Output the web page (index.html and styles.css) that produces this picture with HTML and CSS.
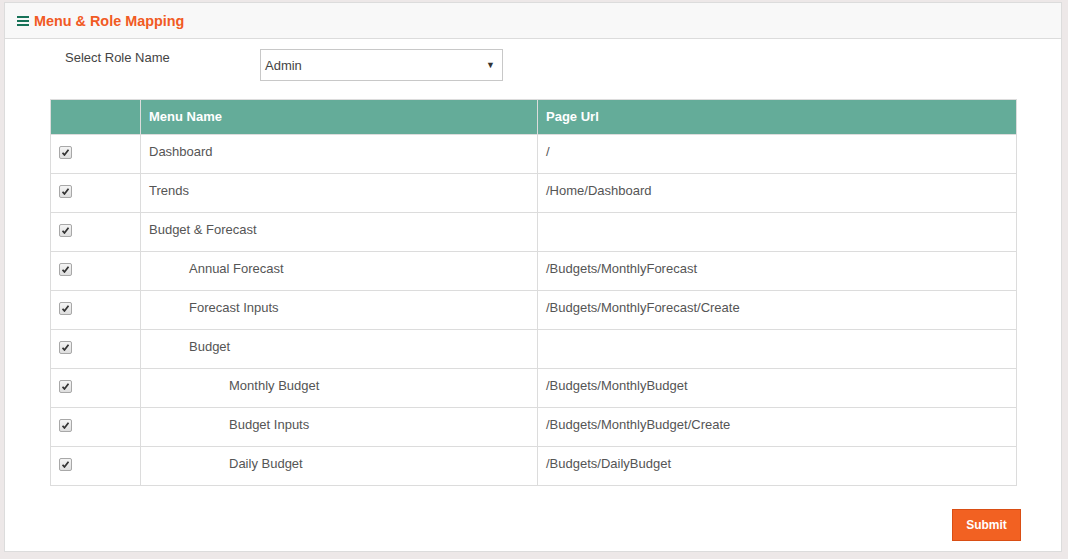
FILE: index.html
```html
<!DOCTYPE html>
<html>
<head>
<meta charset="utf-8">
<link rel="stylesheet" href="styles.css">
</head>
<body>
<div class="panel">
  <div class="panel-head">
    <svg class="bars" width="12" height="10" viewBox="0 0 12 10"><rect x="0" y="0" width="12" height="2" fill="#177258"/><rect x="0" y="4" width="12" height="2" fill="#177258"/><rect x="0" y="8" width="12" height="2" fill="#177258"/></svg>
    <span class="title">Menu &amp; Role Mapping</span>
  </div>
  <div class="panel-body">
    <div class="form-row">
      <label class="lbl">Select Role Name</label>
      <div class="select"><span>Admin</span><span class="caret">&#9660;</span></div>
    </div>
    <table class="grid">
      <colgroup><col class="c1"><col class="c2"><col class="c3"></colgroup>
      <thead>
        <tr><th></th><th>Menu Name</th><th>Page Url</th></tr>
      </thead>
      <tbody>
        <tr><td><span class="cb"></span></td><td>Dashboard</td><td>/</td></tr>
        <tr><td><span class="cb"></span></td><td>Trends</td><td>/Home/Dashboard</td></tr>
        <tr><td><span class="cb"></span></td><td>Budget &amp; Forecast</td><td></td></tr>
        <tr><td><span class="cb"></span></td><td class="l2">Annual Forecast</td><td>/Budgets/MonthlyForecast</td></tr>
        <tr><td><span class="cb"></span></td><td class="l2">Forecast Inputs</td><td>/Budgets/MonthlyForecast/Create</td></tr>
        <tr><td><span class="cb"></span></td><td class="l2">Budget</td><td></td></tr>
        <tr><td><span class="cb"></span></td><td class="l3">Monthly Budget</td><td>/Budgets/MonthlyBudget</td></tr>
        <tr><td><span class="cb"></span></td><td class="l3">Budget Inputs</td><td>/Budgets/MonthlyBudget/Create</td></tr>
        <tr><td><span class="cb"></span></td><td class="l3">Daily Budget</td><td>/Budgets/DailyBudget</td></tr>
      </tbody>
    </table>
    <div class="actions"><button class="btn">Submit</button></div>
  </div>
</div>
</body>
</html>
```
FILE: styles.css
```css
html, body { margin: 0; padding: 0; }
body {
  background: #ede8e8;
  font-family: "Liberation Sans", Arial, sans-serif;
  font-size: 13px;
  color: #555;
  width: 1068px;
  height: 559px;
  overflow: hidden;
}
.panel {
  margin: 2px 0 0 4px;
  width: 1056px;
  height: 548px;
  background: #fff;
  border: 1px solid #dcdcdc;
}
.panel-head {
  height: 35px;
  background: #f8f8f8;
  border-bottom: 1px solid #dcdcdc;
  display: flex;
  align-items: center;
  padding-left: 12px;
  gap: 5px;
}
.bars { display: block; }
.title {
  color: #f15a24;
  font-weight: bold;
  font-size: 14.4px;
}
.panel-body {
  padding: 10px 0 0 45px;
}
.form-row {
  display: flex;
  align-items: flex-start;
  height: 32px;
}
.lbl {
  width: 210px;
  padding-left: 15px;
  box-sizing: border-box;
  line-height: 18px;
  color: #444;
}
.select {
  display: flex;
  align-items: center;
  justify-content: space-between;
  padding: 0 5px 0 4px;
  box-sizing: border-box;
  width: 243px;
  height: 32px;
  border: 1px solid #c8c8c8;
  color: #444;
  font-size: 13px;
}
.caret { font-size: 9px; color: #333; margin-right: 2px; }
.grid {
  margin-top: 18px;
  border-collapse: collapse;
  width: 967px;
  table-layout: fixed;
}
.c1 { width: 90px; }
.c2 { width: 397px; }
.grid th, .grid td {
  border: 1px solid #dcdcdc;
  text-align: left;
  line-height: 20px;
}
.grid th {
  background: #64ac99;
  color: #fff;
  font-weight: bold;
  padding: 7px 8px 7px 8px;
}
.grid th + th { border-left: 1px solid #e8e8e8; }
.grid td {
  padding: 7px 8px 11px 8px;
  color: #555;
}
.grid td:first-child { padding-left: 8px; }
.grid td.l2 { padding-left: 48px; }
.grid td.l3 { padding-left: 88px; }
.cb {
  display: inline-block;
  width: 11px;
  height: 11px;
  border: 1px solid #a8a8a8;
  border-radius: 2px;
  background: linear-gradient(#f4f4f4, #dedede);
  vertical-align: -3px;
  position: relative;
  margin-top: 2px;
}
.cb::after {
  content: "";
  position: absolute;
  left: 2px;
  top: 1px;
  width: 7px;
  height: 8px;
  background: no-repeat center/contain url("data:image/svg+xml;utf8,<svg xmlns='http://www.w3.org/2000/svg' viewBox='0 0 8 8'><path d='M0.6 4.4 L2.8 6.8 L7.4 0.8' fill='none' stroke='%23333' stroke-width='2'/></svg>");
}
.actions {
  display: flex;
  justify-content: flex-end;
  padding-right: 40px;
  margin-top: 23px;
}
.btn {
  width: 69px;
  height: 32px;
  background: #f26122;
  border: 1px solid #d94e14;
  color: #fff;
  font-family: "Liberation Sans", Arial, sans-serif;
  font-size: 12px;
  font-weight: bold;
  padding: 0;
}
```
